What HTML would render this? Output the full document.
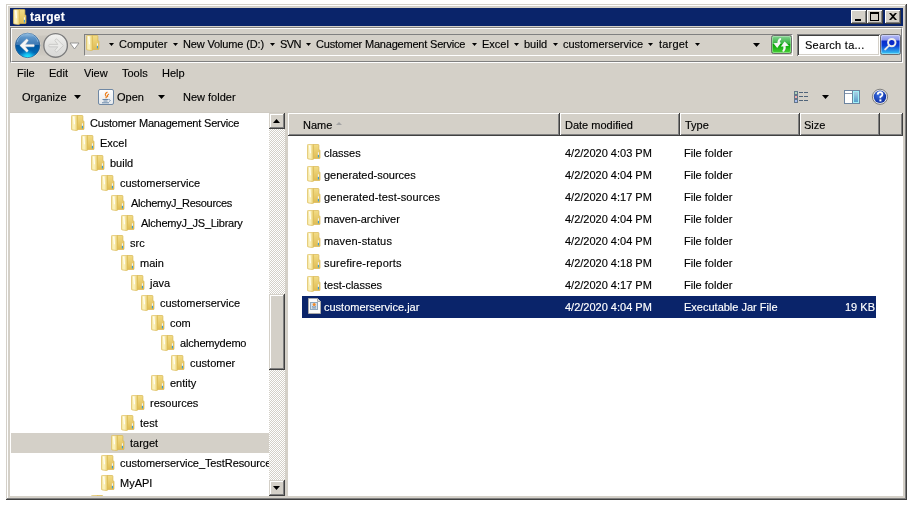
<!DOCTYPE html>
<html><head><meta charset="utf-8">
<style>
*{margin:0;padding:0;box-sizing:border-box}
html,body{width:914px;height:505px;overflow:hidden;background:#fff}
body{position:relative;font-family:"Liberation Sans",sans-serif;font-size:11px;color:#000}
.a{position:absolute}
.t{position:absolute;white-space:nowrap;line-height:13px;font-size:11px;will-change:transform;-webkit-text-stroke-width:0.15px}
#win{left:6px;top:4px;width:901px;height:496px;background:#d4d0c8;
 box-shadow:inset -1px -1px #404040,inset 1px 1px #d4d0c8,inset -2px -2px #808080,inset 2px 2px #fff}
#title{left:10px;top:8px;width:893px;height:18px;background:#0a246a}
.cb{position:absolute;top:10px;width:16px;height:14px;background:#d4d0c8;
 box-shadow:inset -1px -1px #404040,inset 1px 1px #fff,inset -2px -2px #808080}
.raised{box-shadow:inset -1px -1px #404040,inset 1px 1px #d4d0c8,inset -2px -2px #808080,inset 2px 2px #fff}
.hdr{position:absolute;top:113px;height:23px;background:#d4d0c8;
 box-shadow:inset -1px -1px #404040,inset 1px 1px #fff,inset -2px -2px #808080}
.checker{background-color:#fff;background-image:linear-gradient(45deg,#d4d0c8 25%,transparent 25%,transparent 75%,#d4d0c8 75%),linear-gradient(45deg,#d4d0c8 25%,transparent 25%,transparent 75%,#d4d0c8 75%);background-size:2px 2px;background-position:0 0,1px 1px}
svg.fi{position:absolute;width:14px;height:16px;overflow:visible}
</style></head><body>
<svg width="0" height="0" style="position:absolute">
 <defs>
  <linearGradient id="gfront" x1="0" y1="0" x2="1" y2="0">
   <stop offset="0" stop-color="#f2e29a"/><stop offset="0.45" stop-color="#fdf5c4"/><stop offset="1" stop-color="#e8cc6c"/>
  </linearGradient>
  <linearGradient id="gback" x1="0" y1="0" x2="0" y2="1">
   <stop offset="0" stop-color="#f2dc86"/><stop offset="1" stop-color="#dfbc54"/>
  </linearGradient>
  <symbol id="folder" viewBox="0 0 14 16">
   <path d="M6 0.5 H11.2 Q11.9 0.5 11.9 1.2 V6 H12.5 Q13 6 13 6.6 V14 Q13 14.5 12.5 14.5 H6 Z" fill="url(#gback)" stroke="#d9b652" stroke-width="0.7"/>
   <rect x="10.9" y="8.3" width="1" height="2.6" fill="#f4f8ff"/>
   <rect x="10.9" y="10.9" width="1" height="2.5" fill="#2a9ae2"/>
   <path d="M0.4 1.4 Q0.4 0.4 1.4 0.4 H5.4 Q6.4 0.4 6.4 1.4 V15 Q6.4 15.7 5.6 15.6 L1.2 14.9 Q0.4 14.8 0.4 14 Z" fill="url(#gfront)" stroke="#dcba56" stroke-width="0.7"/>
   <path d="M2.1 1.6 H3.3 L3.9 9.2 H2.9 Z" fill="#ffffff"/>
  </symbol>
 </defs>
</svg>

<div id="win" class="a"></div>
<div id="title" class="a"></div>
<svg class="fi" style="left:13px;top:9px"><use href="#folder"/></svg>
<div class="t" style="left:30px;top:11px;color:#fff;font-weight:bold;font-size:12px;letter-spacing:0.3px">target</div>
<div class="cb" style="left:851px"><div class="a" style="left:4px;top:9px;width:6px;height:2px;background:#000"></div></div>
<div class="cb" style="left:867px"><div class="a" style="left:3px;top:2px;width:9px;height:9px;border:1px solid #000;border-top-width:2px"></div></div>
<div class="cb" style="left:885px">
 <svg class="a" style="left:4px;top:3px" width="8" height="7" viewBox="0 0 8 7"><path d="M0 0H2L4 2L6 0H8L5 3.5L8 7H6L4 5L2 7H0L3 3.5Z" fill="#000"/></svg>
</div>


<!-- nav buttons -->
<svg class="a" style="left:12px;top:29px" width="80" height="32" viewBox="12 29 80 32">
 <defs>
  <linearGradient id="gbt" x1="0" y1="0" x2="0" y2="1">
   <stop offset="0" stop-color="#9cc4e4"/><stop offset="0.18" stop-color="#5c94c8"/><stop offset="0.5" stop-color="#3874b0"/><stop offset="0.5" stop-color="#0056a0"/><stop offset="0.8" stop-color="#0068b4"/><stop offset="1" stop-color="#1ab8ec"/>
  </linearGradient>
  <radialGradient id="gbg" gradientUnits="userSpaceOnUse" cx="27.6" cy="57.8" r="8.5"><stop offset="0" stop-color="#20f4ff" stop-opacity="1"/><stop offset="0.45" stop-color="#16c8f6" stop-opacity="0.85"/><stop offset="1" stop-color="#0a90d8" stop-opacity="0"/></radialGradient>
  <linearGradient id="gfw" x1="0" y1="0" x2="0" y2="1">
   <stop offset="0" stop-color="#f4f4f2"/><stop offset="0.5" stop-color="#e2e2e0"/><stop offset="1" stop-color="#d8d8d6"/>
  </linearGradient>
  <linearGradient id="gbr" x1="0" y1="0" x2="0" y2="1">
   <stop offset="0" stop-color="#cdc9c1"/><stop offset="0.5" stop-color="#c2beb6"/><stop offset="1" stop-color="#d2cec6"/>
  </linearGradient>
 </defs>
 <path d="M27 34 Q41 37 55 34 V57 Q41 54 27 57 Z" fill="url(#gbr)"/>
 <circle cx="27.6" cy="45.4" r="13" fill="#e6e2da"/>
 <circle cx="27.6" cy="45.4" r="12.2" fill="url(#gbt)" stroke="#2a5a8c" stroke-width="0.8"/>
 <clipPath id="cbk"><circle cx="27.6" cy="45.4" r="11.8"/></clipPath><rect x="14" y="45.4" width="28" height="14" fill="url(#gbg)" clip-path="url(#cbk)"/><path d="M17.2 42 A10.6 10.6 0 0 1 38 42" fill="none" stroke="#a8d0f0" stroke-opacity="0.5" stroke-width="1"/>
 <path d="M19.8 45.6 L26.5 39 Q27.4 38.6 28.3 40.6 L25.4 44.4 H34 Q34.9 45.6 34 46.8 H25.4 L28.3 50.4 Q27.4 52.4 26.5 52 Z" fill="#f6f6f6" stroke="#d8d8d8" stroke-width="0.4"/>
 <circle cx="55.6" cy="45.4" r="12.6" fill="#e4e0da"/>
 <circle cx="55.6" cy="45.4" r="11.8" fill="url(#gfw)" stroke="#7c7c7c" stroke-width="1.4"/>
 <path d="M63.4 45.6 L56.7 39 Q55.8 38.6 54.9 40.6 L57.8 44.4 H49.2 Q48.3 45.6 49.2 46.8 H57.8 L54.9 50.4 Q55.8 52.4 56.7 52 Z" fill="#ebebe9" stroke="#c4c4c2" stroke-width="0.8"/>
 <path d="M70 43 H79 L74.5 49 Z" fill="#fff" stroke="#8c8c8c" stroke-width="0.9" stroke-linejoin="round"/>
</svg>

<!-- address box -->
<div class="a" style="left:84px;top:34px;width:709px;height:22px;border-top:1px solid #808080;border-left:1px solid #808080;border-right:1px solid #fff;border-bottom:1px solid #fff"></div>
<svg class="fi" style="left:86px;top:35px"><use href="#folder"/></svg>
<svg class="a" style="left:109px;top:43px" width="5" height="3"><path d="M0 0H5L2.5 3Z" fill="#000"/></svg>
<div class="t" style="left:119px;top:38px">Computer</div>
<svg class="a" style="left:173px;top:43px" width="5" height="3"><path d="M0 0H5L2.5 3Z" fill="#000"/></svg>
<div class="t" style="left:183px;top:38px;letter-spacing:-0.14px">New Volume (D:)</div>
<svg class="a" style="left:270px;top:43px" width="5" height="3"><path d="M0 0H5L2.5 3Z" fill="#000"/></svg>
<div class="t" style="left:280px;top:38px;letter-spacing:-0.6px">SVN</div>
<svg class="a" style="left:306px;top:43px" width="5" height="3"><path d="M0 0H5L2.5 3Z" fill="#000"/></svg>
<div class="t" style="left:316px;top:38px;letter-spacing:-0.2px">Customer Management Service</div>
<svg class="a" style="left:472px;top:43px" width="5" height="3"><path d="M0 0H5L2.5 3Z" fill="#000"/></svg>
<div class="t" style="left:482px;top:38px">Excel</div>
<svg class="a" style="left:514px;top:43px" width="5" height="3"><path d="M0 0H5L2.5 3Z" fill="#000"/></svg>
<div class="t" style="left:524px;top:38px">build</div>
<svg class="a" style="left:553px;top:43px" width="5" height="3"><path d="M0 0H5L2.5 3Z" fill="#000"/></svg>
<div class="t" style="left:563px;top:38px">customerservice</div>
<svg class="a" style="left:648px;top:43px" width="5" height="3"><path d="M0 0H5L2.5 3Z" fill="#000"/></svg>
<div class="t" style="left:659px;top:38px;letter-spacing:0.2px">target</div>
<svg class="a" style="left:695px;top:43px" width="5" height="3"><path d="M0 0H5L2.5 3Z" fill="#000"/></svg>
<svg class="a" style="left:753px;top:43px" width="7" height="4"><path d="M0 0H7L3.5 4Z" fill="#000"/></svg>
<!-- refresh -->
<svg class="a" style="left:770px;top:34px" width="23" height="21" viewBox="770 34 23 21">
 <defs><linearGradient id="grf" x1="0" y1="0" x2="0" y2="1">
  <stop offset="0" stop-color="#8ad49a"/><stop offset="0.45" stop-color="#34b43c"/><stop offset="0.5" stop-color="#06a406"/><stop offset="1" stop-color="#4ed23a"/>
 </linearGradient></defs>
 <rect x="771.5" y="35.5" width="20" height="18" rx="2" fill="url(#grf)" stroke="#6e706e" stroke-width="1"/>
 <rect x="772.5" y="36.5" width="18" height="16" rx="1.5" fill="none" stroke="#c8f0c8" stroke-opacity="0.5" stroke-width="1"/>
 <path d="M773.4 43.2 L781.2 42.6 L777.2 48 Z M777.4 43 Q777.4 39.4 780.2 38.1 Q781.8 38.4 781 39.8 Q779.4 40.8 779.8 43 Z" fill="#f6f6f6"/>
 <path d="M780.8 46.4 L789 45.8 L784.6 41.6 Z M783.4 46 Q783.8 49.6 782.2 51 Q783 52.2 784.2 51.4 Q786.2 49.6 785.8 46 Z" fill="#f6f6f6"/>
</svg>
<!-- search -->
<div class="a" style="left:797px;top:34px;width:83px;height:22px;background:#fff;box-shadow:inset 1px 1px #808080,inset -1px -1px #fff,inset 2px 2px #404040,inset -2px -2px #d4d0c8"></div>
<div class="t" style="left:805px;top:39px;letter-spacing:0.27px">Search ta...</div>
<svg class="a" style="left:880px;top:34px" width="22" height="22" viewBox="880 34 22 22">
 <defs><linearGradient id="gsr" x1="0" y1="0" x2="0" y2="1">
  <stop offset="0" stop-color="#b8bef6"/><stop offset="0.28" stop-color="#8c96ea"/><stop offset="0.32" stop-color="#0a2ccc"/><stop offset="0.55" stop-color="#0a3cd4"/><stop offset="1" stop-color="#3cd4f6"/>
 </linearGradient></defs>
 <rect x="880.5" y="34.5" width="20" height="20" rx="2" fill="url(#gsr)" stroke="#6c6c70" stroke-width="1"/>
 <rect x="881.5" y="35.5" width="18" height="18" rx="1.5" fill="none" stroke="#ffffff" stroke-opacity="0.35" stroke-width="1"/>
 <circle cx="891.8" cy="42.6" r="3.7" fill="#0828c8" stroke="#ececec" stroke-width="2"/>
 <path d="M889.2 45.4 L885.2 49.4" stroke="#e6e6e6" stroke-width="2" stroke-linecap="round"/>
</svg>

<!-- nav box (etched) -->
<div class="a" style="left:10px;top:27px;width:893px;height:36px;border-top:1px solid #808080;border-left:1px solid #808080;border-right:1px solid #fff;border-bottom:1px solid #fff"></div>
<div class="a" style="left:11px;top:28px;width:891px;height:34px;border-top:1px solid #fff;border-left:1px solid #fff;border-right:1px solid #808080;border-bottom:1px solid #808080"></div>

<!-- menu -->
<div class="t" style="left:17px;top:67px">File</div>
<div class="t" style="left:49px;top:67px">Edit</div>
<div class="t" style="left:84px;top:67px">View</div>
<div class="t" style="left:122px;top:67px">Tools</div>
<div class="t" style="left:162px;top:67px">Help</div>

<!-- toolbar -->
<div class="t" style="left:22px;top:91px">Organize</div>
<div class="t" style="left:117px;top:91px">Open</div>
<div class="t" style="left:183px;top:91px">New folder</div>

<svg class="a" style="left:74px;top:95px" width="7" height="4"><path d="M0 0H7L3.5 4Z" fill="#000"/></svg>
<svg class="a" style="left:97px;top:88px" width="18" height="18" viewBox="97 88 18 18">
 <defs><linearGradient id="gjv" x1="0" y1="0" x2="0" y2="1"><stop offset="0" stop-color="#ffffff"/><stop offset="1" stop-color="#e4e8ec"/></linearGradient></defs>
 <rect x="98.5" y="89.5" width="15" height="15" rx="1.5" fill="url(#gjv)" stroke="#6f88a4" stroke-width="1"/>
 <path d="M107.5 92 Q104 94 106 96 Q107 97.5 105.5 98 M109 94 Q106.5 95.5 108 97" stroke="#ec7a14" stroke-width="1.1" fill="none"/>
 <path d="M102.5 99.5 H108.5 M103.5 101 H107.5 M102 102.8 H109 M109.2 99.3 Q111 100.2 109.5 101.5" stroke="#5a7ca0" stroke-width="0.9" fill="none"/>
</svg>
<svg class="a" style="left:158px;top:95px" width="7" height="4"><path d="M0 0H7L3.5 4Z" fill="#000"/></svg>
<!-- right toolbar icons -->
<svg class="a" style="left:792px;top:88px" width="20" height="18" viewBox="792 88 20 18">
 <rect x="794" y="91" width="4" height="4" fill="#64768a"/><rect x="795" y="92" width="2" height="2" fill="#fff"/><circle cx="796" cy="93" r="0.7" fill="#2a8a3a"/>
 <rect x="794" y="95" width="4" height="4" fill="#64768a"/><rect x="795" y="96" width="2" height="2" fill="#fff"/><circle cx="796" cy="97" r="0.7" fill="#e01818"/>
 <rect x="794" y="99" width="4" height="4" fill="#64768a"/><rect x="795" y="100" width="2" height="2" fill="#fff"/><circle cx="796" cy="101" r="0.7" fill="#1850d8"/>
 <path d="M799 92.5H803M804 92.5H808M799 96.5H803M804 96.5H808M799 100.5H803M804 100.5H808" stroke="#50647a" stroke-width="1"/>
</svg>
<svg class="a" style="left:822px;top:95px" width="7" height="4"><path d="M0 0H7L3.5 4Z" fill="#000"/></svg>
<svg class="a" style="left:843px;top:89px" width="18" height="16" viewBox="843 89 18 16">
 <defs><linearGradient id="gpv" x1="0" y1="0" x2="0" y2="1"><stop offset="0" stop-color="#b8d8e8"/><stop offset="1" stop-color="#4a98c8"/></linearGradient></defs>
 <rect x="844.5" y="90.5" width="15" height="13" fill="#fff" stroke="#6c84a0" stroke-width="1"/>
 <path d="M845 93.5H852" stroke="#8898b0" stroke-width="1"/>
 <rect x="852.5" y="90.5" width="7" height="13" fill="url(#gpv)" stroke="#6c84a0" stroke-width="1"/>
 <rect x="853.5" y="91.5" width="5" height="11" fill="none" stroke="#a0f0f8" stroke-width="1"/>
</svg>
<svg class="a" style="left:871px;top:88px" width="18" height="18" viewBox="871 88 18 18">
 <defs><radialGradient id="ghp" cx="0.4" cy="0.35" r="0.7"><stop offset="0" stop-color="#3a6ee0"/><stop offset="1" stop-color="#0a2aa0"/></radialGradient></defs>
 <circle cx="880" cy="96.8" r="7.6" fill="#e8e8e8" stroke="#808080" stroke-width="1"/>
 <circle cx="880" cy="96.8" r="6.2" fill="url(#ghp)"/>
 <path d="M877.6 94.6 Q877.8 92.2 880.2 92.2 Q882.6 92.4 882.4 94.6 Q882.2 96 880.4 96.8 V98.2" stroke="#fff" stroke-width="1.8" fill="none"/>
 <rect x="879.4" y="99.4" width="2" height="2" fill="#fff"/>
</svg>


<div class="a" style="left:10px;top:112px;width:893px;height:1px;background:#cecac2"></div>
<!-- content -->
<div class="a" style="left:10px;top:113px;width:259px;height:383px;background:#fff"></div>
<div class="a checker" style="left:269px;top:113px;width:16px;height:383px"></div>
<div class="a" style="left:288px;top:113px;width:615px;height:383px;background:#fff"></div>

<div class="hdr" style="left:288px;width:272px"></div>
<div class="hdr" style="left:560px;width:120px"></div>
<div class="hdr" style="left:680px;width:120px"></div>
<div class="hdr" style="left:800px;width:80px"></div>
<div class="hdr" style="left:880px;width:23px;box-shadow:inset -1px -1px #404040,inset 0 1px #fff,inset -2px -2px #808080"></div>
<div class="t" style="left:303px;top:119px">Name</div>
<div class="t" style="left:565px;top:119px">Date modified</div>
<div class="t" style="left:685px;top:119px">Type</div>
<div class="t" style="left:804px;top:119px">Size</div>


<!-- tree -->
<div class="a raised" style="left:269px;top:113px;width:16px;height:16px;background:#d4d0c8"></div>
<svg class="a" style="left:273px;top:119px" width="7" height="4"><path d="M0 4H7L3.5 0Z" fill="#000"/></svg>
<div class="a raised" style="left:269px;top:294px;width:16px;height:76px;background:#d4d0c8"></div>
<div class="a raised" style="left:269px;top:480px;width:16px;height:16px;background:#d4d0c8"></div>
<svg class="a" style="left:273px;top:486px" width="7" height="4"><path d="M0 0H7L3.5 4Z" fill="#000"/></svg>
<svg class="a" style="left:335px;top:121px" width="8" height="5"><path d="M1 4H7L4 1Z" fill="#a4a4a4"/></svg>


<div class="a" style="left:0;top:0;width:269px;height:496px;overflow:hidden">
<div class="a" style="left:11px;top:433px;width:258px;height:20px;background:#d4d0c8"></div>
<svg class="fi" style="left:71px;top:115px"><use href="#folder"/></svg>
<div class="t" style="left:90px;top:117px;letter-spacing:-0.2px">Customer Management Service</div>
<svg class="fi" style="left:81px;top:135px"><use href="#folder"/></svg>
<div class="t" style="left:100px;top:137px">Excel</div>
<svg class="fi" style="left:91px;top:155px"><use href="#folder"/></svg>
<div class="t" style="left:110px;top:157px">build</div>
<svg class="fi" style="left:101px;top:175px"><use href="#folder"/></svg>
<div class="t" style="left:120px;top:177px">customerservice</div>
<svg class="fi" style="left:111px;top:195px"><use href="#folder"/></svg>
<div class="t" style="left:131px;top:197px;letter-spacing:-0.3px">AlchemyJ_Resources</div>
<svg class="fi" style="left:121px;top:215px"><use href="#folder"/></svg>
<div class="t" style="left:141px;top:217px;letter-spacing:-0.25px">AlchemyJ_JS_Library</div>
<svg class="fi" style="left:111px;top:235px"><use href="#folder"/></svg>
<div class="t" style="left:130px;top:237px">src</div>
<svg class="fi" style="left:121px;top:255px"><use href="#folder"/></svg>
<div class="t" style="left:140px;top:257px">main</div>
<svg class="fi" style="left:131px;top:275px"><use href="#folder"/></svg>
<div class="t" style="left:150px;top:277px">java</div>
<svg class="fi" style="left:141px;top:295px"><use href="#folder"/></svg>
<div class="t" style="left:160px;top:297px">customerservice</div>
<svg class="fi" style="left:151px;top:315px"><use href="#folder"/></svg>
<div class="t" style="left:170px;top:317px">com</div>
<svg class="fi" style="left:161px;top:335px"><use href="#folder"/></svg>
<div class="t" style="left:180px;top:337px;letter-spacing:-0.2px">alchemydemo</div>
<svg class="fi" style="left:171px;top:355px"><use href="#folder"/></svg>
<div class="t" style="left:190px;top:357px">customer</div>
<svg class="fi" style="left:151px;top:375px"><use href="#folder"/></svg>
<div class="t" style="left:170px;top:377px">entity</div>
<svg class="fi" style="left:131px;top:395px"><use href="#folder"/></svg>
<div class="t" style="left:150px;top:397px">resources</div>
<svg class="fi" style="left:121px;top:415px"><use href="#folder"/></svg>
<div class="t" style="left:140px;top:417px">test</div>
<svg class="fi" style="left:111px;top:435px"><use href="#folder"/></svg>
<div class="t" style="left:130px;top:437px">target</div>
<svg class="fi" style="left:101px;top:455px"><use href="#folder"/></svg>
<div class="t" style="left:120px;top:457px;letter-spacing:-0.08px">customerservice_TestResource</div>
<svg class="fi" style="left:101px;top:475px"><use href="#folder"/></svg>
<div class="t" style="left:120px;top:477px">MyAPI</div>
<svg class="fi" style="left:91px;top:495px"><use href="#folder"/></svg>
</div>
<!-- list -->
<svg class="fi" style="left:307px;top:144px"><use href="#folder"/></svg>
<div class="t" style="left:324px;top:147px">classes</div>
<div class="t" style="left:565px;top:147px">4/2/2020 4:03 PM</div>
<div class="t" style="left:684px;top:147px">File folder</div>
<svg class="fi" style="left:307px;top:166px"><use href="#folder"/></svg>
<div class="t" style="left:324px;top:169px">generated-sources</div>
<div class="t" style="left:565px;top:169px">4/2/2020 4:04 PM</div>
<div class="t" style="left:684px;top:169px">File folder</div>
<svg class="fi" style="left:307px;top:188px"><use href="#folder"/></svg>
<div class="t" style="left:324px;top:191px;letter-spacing:0.14px">generated-test-sources</div>
<div class="t" style="left:565px;top:191px">4/2/2020 4:17 PM</div>
<div class="t" style="left:684px;top:191px">File folder</div>
<svg class="fi" style="left:307px;top:210px"><use href="#folder"/></svg>
<div class="t" style="left:324px;top:213px">maven-archiver</div>
<div class="t" style="left:565px;top:213px">4/2/2020 4:04 PM</div>
<div class="t" style="left:684px;top:213px">File folder</div>
<svg class="fi" style="left:307px;top:232px"><use href="#folder"/></svg>
<div class="t" style="left:324px;top:235px;letter-spacing:0.17px">maven-status</div>
<div class="t" style="left:565px;top:235px">4/2/2020 4:04 PM</div>
<div class="t" style="left:684px;top:235px">File folder</div>
<svg class="fi" style="left:307px;top:254px"><use href="#folder"/></svg>
<div class="t" style="left:324px;top:257px;letter-spacing:0.2px">surefire-reports</div>
<div class="t" style="left:565px;top:257px">4/2/2020 4:18 PM</div>
<div class="t" style="left:684px;top:257px">File folder</div>
<svg class="fi" style="left:307px;top:276px"><use href="#folder"/></svg>
<div class="t" style="left:324px;top:279px">test-classes</div>
<div class="t" style="left:565px;top:279px">4/2/2020 4:17 PM</div>
<div class="t" style="left:684px;top:279px">File folder</div>
<div class="a" style="left:302px;top:296px;width:574px;height:22px;background:#0a246a"></div>
<svg class="a" style="left:307px;top:297px" width="16" height="18" viewBox="307 297 16 18">
 <path d="M308.5 298.5 H317.5 L320.5 301.5 V313.5 H308.5 Z" fill="#fafafa" stroke="#a8a8a8" stroke-width="1"/>
 <path d="M317.5 298.5 V301.5 H320.5" fill="#e0e0e0" stroke="#a8a8a8" stroke-width="1"/>
 <rect x="310.5" y="302.5" width="7" height="7" fill="#d4e0ea" stroke="#90a8bc" stroke-width="1"/>
 <circle cx="314.2" cy="304.6" r="1.5" fill="#f08a2a"/>
 <path d="M312 306.5 Q314 307.8 316 306.5 M312.2 308 H316" stroke="#7890a8" stroke-width="0.9" fill="none"/>
</svg>
<div class="t" style="left:324px;top:301px;color:#fff">customerservice.jar</div>
<div class="t" style="left:565px;top:301px;color:#fff">4/2/2020 4:04 PM</div>
<div class="t" style="left:684px;top:301px;color:#fff">Executable Jar File</div>
<div class="t" style="left:845px;top:301px;color:#fff">19 KB</div>

</body></html>
